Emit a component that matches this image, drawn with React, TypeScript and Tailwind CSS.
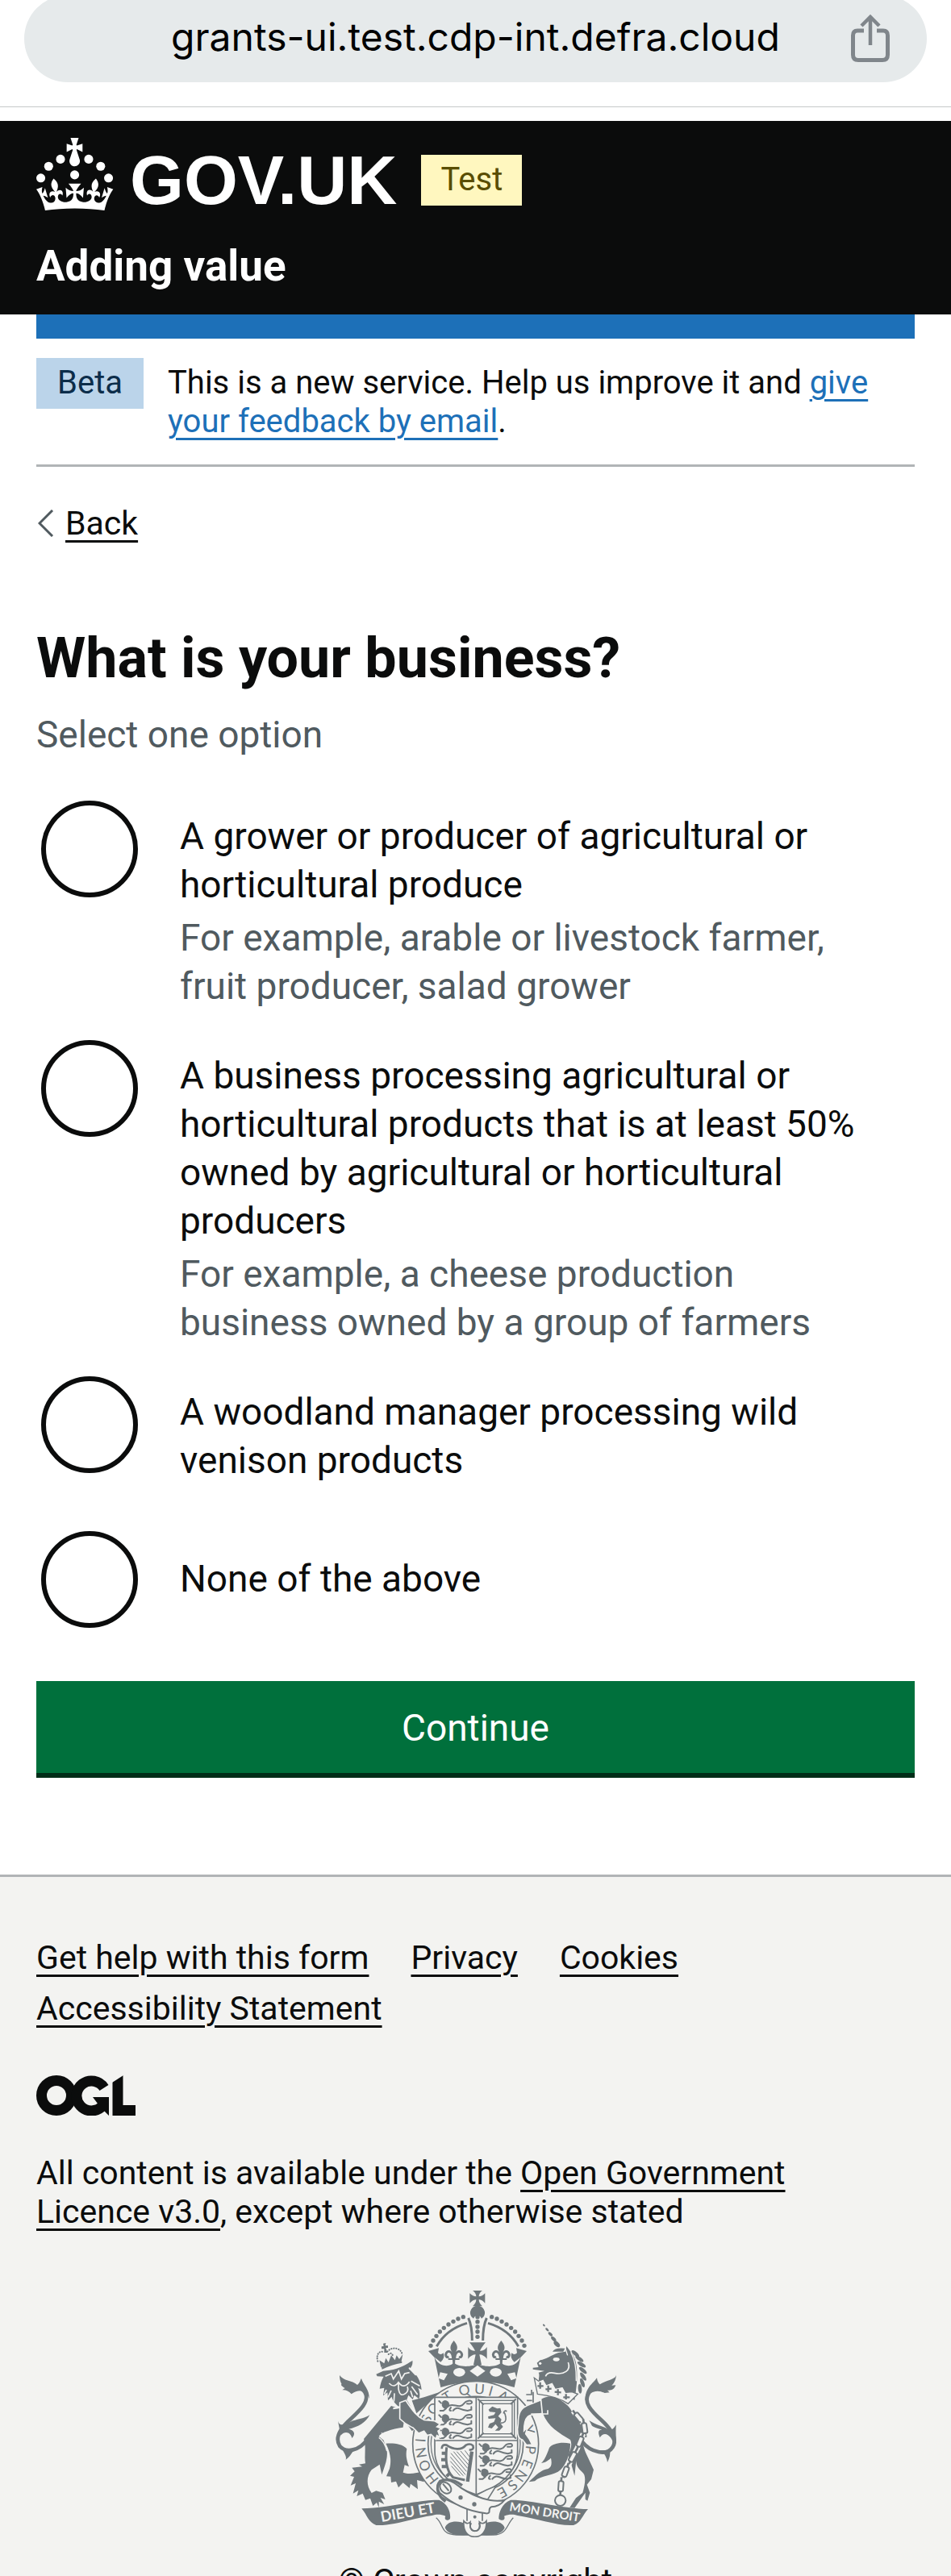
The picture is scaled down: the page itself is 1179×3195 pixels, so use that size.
import type { ReactNode } from "react";

type Option = { id: string; label: string; hint?: string };

const options: Option[] = [
  {
    id: "grower",
    label: "A grower or producer of agricultural or horticultural produce",
    hint: "For example, arable or livestock farmer, fruit producer, salad grower",
  },
  {
    id: "processor",
    label:
      "A business processing agricultural or horticultural products that is at least 50% owned by agricultural or horticultural producers",
    hint: "For example, a cheese production business owned by a group of farmers",
  },
  { id: "woodland", label: "A woodland manager processing wild venison products" },
  { id: "none", label: "None of the above" },
];

const footerLinks = ["Get help with this form", "Privacy", "Cookies", "Accessibility Statement"];

function TextLink({ children, className = "" }: { children: ReactNode; className?: string }) {
  return (
    <a href="#" className={`underline decoration-[3px] underline-offset-[7px] ${className}`}>
      {children}
    </a>
  );
}

function ShareIcon() {
  return (
    <svg viewBox="0 0 50 60" className="h-[60px] w-[50px]" fill="none" stroke="#80868b" strokeWidth="5" aria-hidden="true">
      <path d="M17 20H9Q3.500 20 3.500 26V50Q3.500 56.500 10 56.500H40Q46.500 56.500 46.500 50V26Q46.500 20 41 20H33" />
      <path d="M25 38V4M14 14L25 3L36 14" strokeWidth="4.500" />
    </svg>
  );
}

function CrownIcon() {
  return (
    <svg viewBox="0 0 64 60" className="h-[90px] w-24" fill="#fff" aria-hidden="true">
      <circle cx="20" cy="17.6" r="3.7" />
      <circle cx="10.2" cy="23.5" r="3.7" />
      <circle cx="3.7" cy="33.2" r="3.7" />
      <circle cx="31.7" cy="30.6" r="3.7" />
      <circle cx="43.3" cy="17.6" r="3.7" />
      <circle cx="53.2" cy="23.5" r="3.7" />
      <circle cx="59.7" cy="33.2" r="3.7" />
      <path d="M33.1,9.8c.2-.1.3-.3.5-.5l4.6,2.4v-6.8l-4.6,1.5c-.1-.2-.3-.3-.5-.5l1.9-5.9h-6.7l1.9,5.9c-.2.1-.3.3-.5.5l-4.6-1.5v6.8l4.6-2.4c.1.2.3.3.5.5l-2.6,8c-.9,2.8,1.2,5.7,4.1,5.7h0c3,0,5.1-2.9,4.1-5.7l-2.6-8ZM37,37.9s-3.4,3.8-4.1,6.1c2.2,0,4.2-.5,6.4-2.8l-.7,8.5c-2-2.8-4.4-4.1-5.7-3.8.1,3.1.5,6.7,5.8,7.2,3.7.3,6.7-1.5,7-3.8.4-2.6-2-4.3-3.7-1.6-1.4-4.5,2.4-6.1,4.9-3.2-1.9-4.5-1.8-7.7,2.4-10.9,3,4,2.6,7.3-1.2,11.1,2.4-1.3,6.2,0,4,4.6-1.2-2.8-3.7-2.2-4.2.2-.3,1.7.7,3.7,3,4.2,1.9.3,4.7-.9,7-5.9-1.3,0-2.4.7-3.9,1.7l2.4-8c.6,2.3,1.4,3.7,2.2,4.5.6-1.6.5-2.8,0-5.3l5,1.8c-2.6,3.6-5.2,8.7-7.3,17.5-7.4-1.1-15.7-1.7-24.5-1.7h0c-8.8,0-17.1.6-24.5,1.7-2.1-8.9-4.7-13.9-7.3-17.5l5-1.8c-.5,2.5-.6,3.7,0,5.3.8-.8,1.6-2.3,2.2-4.5l2.4,8c-1.5-1-2.6-1.7-3.9-1.7,2.3,5,5.2,6.2,7,5.9,2.3-.4,3.3-2.4,3-4.2-.5-2.4-3-3.1-4.2-.2-2.2-4.6,1.6-6,4-4.6-3.7-3.7-4.2-7.1-1.2-11.1,4.2,3.2,4.3,6.4,2.4,10.9,2.5-2.8,6.3-1.3,4.9,3.2-1.8-2.7-4.1-1-3.7,1.6.3,2.3,3.3,4.1,7,3.8,5.4-.5,5.7-4.2,5.8-7.2-1.3-.2-3.7,1-5.7,3.8l-.7-8.5c2.2,2.3,4.2,2.7,6.4,2.8-.7-2.3-4.1-6.1-4.1-6.1h10.6,0Z" />
    </svg>
  );
}

function LicenceMark() {
  return (
    <svg viewBox="0 0 123 50" className="h-[50px] w-[123px]" role="img" aria-label="Open Government Licence">
      <g fill="none" stroke="#0b0c0c" strokeWidth="13">
        <circle cx="25" cy="25" r="18.500" />
        <path d="M84 15.500A18.500 18.500 0 1 0 82 38" />
        <path d="M101 0V43.500H123" strokeLinejoin="miter" />
      </g>
      <path d="M70 27H90V50L84 44L70 46L76 35Z" fill="#0b0c0c" />
      <path d="M94 0H108L94 9Z" fill="#f3f3f1" />
    </svg>
  );
}

const INK = "#6f777b";
const GROUND = "#f3f3f1";

const mottoLetters: [string, number][] = [
  ["H", -128], ["O", -113], ["N", -99], ["I", -86], ["S", -63], ["O", -50], ["T", -31],
  ["Q", -12], ["U", 4], ["I", 16], ["A", 30], ["Y", 75], ["P", 96], ["E", 111], ["N", 125],
  ["S", 138], ["E", 151],
];

const arcBeads = [[75, 223], [84, 204], [96, 187], [109, 171], [124, 157], [141, 144], [159, 133], [177, 123], [196, 116]];
const maneLeaves = [[1003, 418, 40], [1018, 437, 35], [1026, 458, 32], [1031, 480, 40], [1032, 503, 55], [1029, 526, 70], [1020, 548, 85]];
const hornTwists = [[886, 312, 5, 3], [898, 328, 8, 4], [910, 345, 10, 5], [922, 363, 12, 6], [934, 382, 14, 8]];
const chainLinks = [[1015, 655, -40], [1037, 695, -8], [1020, 745, 22], [993, 802, 28], [966, 857, 20], [949, 911, 4]];
const passantLions = [[494, 588], [494, 640], [494, 690], [644, 748], [644, 793], [640, 842]];

function PassantLion({ x, y }: { x: number; y: number }) {
  return (
    <g transform={`translate(${x} ${y})`} stroke={INK} strokeLinecap="round" fill="none" strokeWidth="6">
      <path d="M14 8Q24 -2 36 8Q44 16 36 30L26 36Q14 32 12 22Z" fill={INK} stroke="none" />
      <path d="M34 26C50 12 66 28 82 24S94 8 108 6Q122 2 124 10T106 16" />
      <path d="M2 6L10 14M6 42H18L28 34M46 30Q36 42 46 42" />
      <path d="M54 42Q64 28 78 34T108 42L122 38V28" />
    </g>
  );
}

function Leaf({ x, y, rx, ry, turn }: { x: number; y: number; rx: number; ry: number; turn: number }) {
  return <ellipse cx={x} cy={y} rx={rx} ry={ry} transform={`rotate(${turn} ${x} ${y})`} />;
}

function CrownHalf() {
  return (
    <g>
      {arcBeads.map(([x, y]) => (
        <circle key={x} cx={x} cy={y} r="8" />
      ))}
      <path d="M97 226Q132 162 210 139M215 120Q229 150 229 204" fill="none" stroke={INK} strokeWidth="9" />
      <path d="M66 243L105 232L102 250Q112 260 122 250Q130 268 112 284L86 264Z" />
      <path d="M161 204C148 220 144 232 154 246L157 292H165L168 246C178 232 174 220 161 204Z" />
      <path d="M158 270C156 240 134 238 131 256Q132 270 142 264M164 270C166 240 188 238 191 256Q190 270 180 264" fill="none" stroke={INK} strokeWidth="9" />
      <path d="M140 270H182V276H140Z" />
    </g>
  );
}

function RoyalArms() {
  return (
    <svg viewBox="111 183 1044 918" className="h-[306px] w-[348px]" fill={INK} role="img" aria-label="Royal coat of arms">
      {/* Lion tail, hind legs and body */}
      <path d="M230 735C200 780 150 788 127 762C106 730 132 692 168 660C206 625 232 598 224 570C214 540 186 542 168 560" fill="none" stroke={INK} strokeWidth="14" />
      <path d="M126 498C140 520 172 516 192 534C204 524 202 516 207 510C214 535 238 550 236 585C225 552 198 548 170 568C160 556 148 552 136 553L146 546C134 540 128 532 134 532C128 520 126 510 126 498Z" />
      <path d="M120 668C126 690 148 682 165 672C190 660 214 662 238 646C225 674 192 692 160 698C182 702 186 718 172 732C168 712 148 702 130 722Z" />
      <path d="M138 778C148 795 152 802 149 812C168 800 168 785 188 770Z" />
      <path d="M298 752C325 750 360 752 376 772C370 800 378 820 384 838L368 832L362 860C385 868 410 862 440 856V895L414 888L417 922L390 902L386 918L362 898L345 916L336 893L318 897L316 875L300 874L312 845C318 820 318 790 298 752Z" />
      <path d="M318 612L216 735C226 760 217 800 222 826L198 830L210 838L172 842L182 856L165 872L180 876L167 908L186 900L176 938L196 926L190 948L212 938L222 962L240 956L250 984L264 972L272 990V968L292 978L278 954L296 960L286 935L262 928L245 936C225 910 225 875 245 850L275 830L283 868C292 840 306 810 302 780L290 740L272 725C280 710 320 698 362 692L366 665L395 705L420 690C400 630 385 600 375 590L346 622Z" />
      <path d="M272 730Q292 742 302 780M282 712L300 735" fill="none" stroke={GROUND} strokeWidth="4" />
      <path d="M395 592L440 580L500 560L412 640Z" />

      {/* Lion head */}
      <path d="M262 494L288 482C320 482 360 470 397 443C399 458 394 468 384 476C410 488 428 515 431 552L418 545C426 562 425 578 421 586L404 572L398 588L382 572L372 600L346 614C332 604 322 590 320 578L306 592L304 562L288 574L292 545L275 548C278 530 282 515 290 503L266 502Z" />
      <g fill="none" stroke={GROUND} strokeWidth="5">
        <path d="M296 502L318 492L326 512L346 482L356 512L368 492L386 488" />
        <path d="M310 528Q330 548 345 524Q365 552 386 522M345 524V548Q350 582 372 565Q384 556 378 540" />
        <path d="M300 552L292 568M318 555L306 580M330 565L328 596M392 520L424 538M394 540L416 570M390 556L398 580M384 470L410 498" />
        <path d="M325 622Q360 620 372 596" strokeWidth="6" />
      </g>
      <path d="M282 468Q320 448 358 446V452Q320 458 284 476Z" />
      <path d="M274 442L280 468L356 446L361 420L348 438L338 424L332 442L318 424L308 450L298 434L292 454Z" />
      <path d="M288 380L298 378L296 388L306 388V396L298 396L304 414H292L292 400L282 400V391L290 390Z" />
      <path d="M268 446C260 418 276 406 290 412M304 410C320 390 354 396 358 418M308 420Q318 410 326 428" fill="none" stroke={INK} strokeWidth="6" strokeLinecap="round" strokeDasharray="1 8" />

      {/* Unicorn tail, legs and body */}
      <path d="M1028 745C1060 785 1120 800 1142 765C1160 735 1138 700 1100 665C1060 630 1035 600 1050 570C1060 545 1085 540 1110 556" fill="none" stroke={INK} strokeWidth="14" />
      <path d="M1155 498C1150 515 1120 515 1094 532C1084 522 1084 512 1083 508C1068 530 1038 545 1040 592C1055 556 1085 550 1112 564L1130 562L1122 554C1138 556 1148 550 1153 535L1138 536C1150 525 1154 510 1155 498Z" />
      <path d="M1054 666C1080 685 1110 686 1132 704C1142 700 1150 690 1155 682C1150 715 1160 745 1148 765C1142 725 1112 700 1094 730C1085 705 1090 702 1102 700C1080 694 1064 690 1062 680Z" />
      <path d="M1092 778Q1118 790 1122 822Q1134 800 1132 778Z" />
      <path d="M984 752C950 745 918 752 906 768C898 790 890 812 876 825C895 822 905 812 912 806C916 825 915 840 902 846C875 850 858 868 830 895L852 892C875 870 925 872 948 850C968 830 985 790 984 752Z" />
      <path d="M862 600C885 575 915 572 938 586C965 600 988 618 994 645C1022 670 1036 700 1028 730C1030 760 1040 785 1048 800L1071 850L1062 885L1046 905L1057 935L1048 965L1040 960V935L1000 992L982 990L1005 955L1030 935C1040 900 1044 870 1028 858C1012 845 1005 830 1006 815L1000 872L988 830L976 795C986 775 992 755 984 738C945 715 900 690 882 640H835V605Z" />

      {/* Garter */}
      <circle cx="632" cy="754" r="234" fill={GROUND} stroke={INK} strokeWidth="5" />
      <circle cx="632" cy="754" r="177" fill="none" stroke={INK} strokeWidth="5" />
      <circle cx="632" cy="754" r="166" fill="none" stroke={INK} strokeWidth="4" />
      <g fontFamily="Lato, sans-serif" fontSize="52" fontWeight="400" textAnchor="middle">
        {mottoLetters.map(([letter, angle], i) => (
          <text key={i} x="632" y="567" transform={`rotate(${angle} 632 754)`}>
            {letter}
          </text>
        ))}
      </g>

      {/* Quartered shield */}
      <path d="M480 580H788V780C788 860 720 915 634 942C548 915 480 860 480 780Z" fill={GROUND} stroke={INK} strokeWidth="5" />
      <path d="M634 580V942M480 741H788" stroke={INK} strokeWidth="5" />
      {passantLions.map(([x, y]) => (
        <PassantLion key={`${x}-${y}`} x={x} y={y} />
      ))}
      <g fill="none" stroke={INK} strokeWidth="4">
        <rect x="646" y="592" width="130" height="136" />
        <rect x="658" y="604" width="110" height="112" />
        <path d="M640 586L662 608M782 586L762 606M640 734L662 712M782 734L762 712" strokeWidth="6" />
      </g>
      <path d="M694 614L712 622L724 620L728 636L716 650L728 662L724 676L734 690L720 704H704L716 692L706 680L692 696L678 692L684 678L700 672L706 658L680 660L678 652L700 646L706 636L684 634L680 626Z" />
      <path d="M724 676Q748 676 744 654T736 640Q738 626 748 632" fill="none" stroke={INK} strokeWidth="5" />
      <g fill="none" stroke={INK}>
        <path d="M506 772Q506 754 524 758C550 776 580 778 596 758Q612 750 622 760Q628 776 608 776" strokeWidth="8" />
        <path d="M524 766C520 810 520 850 548 878L592 888" strokeWidth="9" />
        <path d="M618 782L602 894" strokeWidth="13" />
        <path d="M524 788H506M522 812H504M524 838H506M536 862L524 874" strokeWidth="12" />
        <path d="M540 788L598 856M550 782L602 844M562 782L606 832M576 780L608 818M538 802L594 868M538 818L586 872M542 836L574 872M592 778L610 802" strokeWidth="3" />
      </g>

      {/* Supporters' forelegs over the shield */}
      <path d="M350 600L372 592C395 625 410 650 440 664L480 668L500 680L488 690L504 696L492 706L500 728L488 722L484 736L466 718L452 722L440 706L420 714L400 694Q370 680 350 660Z" stroke={GROUND} strokeWidth="5" />
      <path d="M880 640C865 645 840 640 826 652C812 665 812 690 812 705L826 690L818 716L832 736L842 756L822 758L806 738C785 735 786 700 790 680C790 640 796 620 835 606L875 590Z" stroke={GROUND} strokeWidth="5" />
      <path d="M838 642H900V628" fill="none" stroke={GROUND} strokeWidth="5" />

      {/* Unicorn head, mane and coronet collar */}
      <path d="M860 452L872 442C895 438 912 424 940 414L966 410L970 390L986 412C1012 440 1016 500 1000 590L950 570L868 522C864 510 872 500 866 488L888 482L845 476V470L866 468Z" />
      {maneLeaves.map(([x, y, turn]) => (
        <Leaf key={y} x={x} y={y} rx={18} ry={7} turn={turn} />
      ))}
      {hornTwists.map(([x, y, rx, ry]) => (
        <Leaf key={y} x={x} y={y} rx={rx} ry={ry} turn={45} />
      ))}
      <path d="M918 410Q926 394 964 398L958 410Z" />
      <g fill="none" stroke={GROUND} strokeWidth="5">
        <path d="M976 450C988 480 960 498 925 490C905 486 896 492 892 502" />
        <path d="M966 398L974 424M986 412Q1008 450 1006 520" strokeWidth="4" />
      </g>
      <ellipse cx="932" cy="439" rx="12" ry="7" fill={GROUND} />
      <circle cx="872" cy="454" r="5" fill={GROUND} />
      <path d="M850 508L866 520L884 512L896 532L918 524L930 546L956 540L968 562L990 560L1012 568L976 604C940 580 900 572 862 568Z" fill={GROUND} stroke={INK} strokeWidth="4" />
      <path d="M872 524V548M862 538H884M902 536V560M892 550L914 548M938 550V572M926 560L950 562M968 568V588M958 580L982 580" stroke={INK} strokeWidth="7" />
      <path d="M820 570H840V552M822 592H842M846 560V600" fill="none" stroke={INK} strokeWidth="5" />

      {/* Chain */}
      {chainLinks.map(([x, y, turn]) => (
        <g key={y} transform={`rotate(${turn} ${x} ${y})`}>
          <path d={`M${x} ${y - 32}V${y + 32}`} stroke={GROUND} strokeWidth="20" />
          <path d={`M${x} ${y - 34}V${y - 18}M${x} ${y + 18}V${y + 34}`} stroke={INK} strokeWidth="8" />
          <rect x={x - 9} y={y - 19} width="18" height="38" rx="6" fill={GROUND} stroke={INK} strokeWidth="6" />
        </g>
      ))}
      <circle cx="947" cy="964" r="20" fill={GROUND} stroke={INK} strokeWidth="6" />

      {/* Imperial crown */}
      <g transform="translate(390 165)">
        <path d="M84 256L108 382Q249 312 390 382L414 256Z" fill={GROUND} />
        <CrownHalf />
        <g transform="matrix(-1 0 0 1 498 0)">
          <CrownHalf />
        </g>
        <path d="M231 18H267C258 24 254 32 254 40C262 40 270 36 277 28V65C270 56 262 52 254 51C254 60 258 68 267 76H231C240 68 244 60 244 51C236 52 228 56 220 65V28C228 36 236 40 244 40C244 32 240 24 231 18Z" />
        <path d="M249 74A27 27 0 0 1 272 115L264 122A16 16 0 0 0 234 122L226 115A27 27 0 0 1 249 74Z" />
        {[116, 134, 153, 171, 190].map((y) => (
          <circle key={y} cx="249" cy={y} r="8" />
        ))}
        <path d="M219 211H279C270 222 262 234 258 242C268 242 276 240 284 228V272C276 262 266 256 256 256L264 294H234L242 256C232 256 222 262 214 272V228C222 240 230 242 240 242C236 234 228 222 219 211Z" />
        <path d="M86 254C96 306 150 304 161 286C175 304 232 304 249 288C266 304 323 304 337 286C348 304 402 306 412 254L386 378Q249 336 112 378Z" />
        <g fill={GROUND}>
          <ellipse cx="181" cy="322" rx="22" ry="16" />
          <ellipse cx="317" cy="322" rx="22" ry="16" />
          <path d="M249 296L278 317L249 338L220 317Z" />
          <path d="M110 322L138 328L124 352L104 344ZM388 322L360 328L374 352L394 344Z" />
        </g>
      </g>

      {/* Belt and pendant */}
      <path d="M634 944L672 925L708 910L672 968Z" fill={GROUND} stroke={INK} strokeWidth="5" />
      <path d="M600 985V1040M657 1000V1040" stroke={INK} strokeWidth="5" />
      <path d="M500 892C535 878 560 905 582 920C625 948 690 975 740 962C722 985 706 988 690 988C674 994 694 1014 670 1012C615 1005 555 985 498 935C486 918 488 902 500 892Z" fill={GROUND} stroke={INK} strokeWidth="6" />
      <path d="M520 968C490 945 482 915 500 892Q540 876 582 908" fill="none" stroke={INK} strokeWidth="10" />
      <ellipse cx="520" cy="917" rx="18" ry="24" transform="rotate(-45 520 917)" fill="none" stroke={INK} strokeWidth="6" />
      <path d="M510 902L532 928" stroke={INK} strokeWidth="6" />
      <circle cx="576" cy="953" r="8" />
      <circle cx="627" cy="978" r="8" />
      <circle cx="629" cy="1025" r="6" />

      {/* Motto ribbon */}
      <path d="M485 1028C514 1050 500 1092 560 1092H698C750 1092 748 1050 772 1028" fill="none" stroke={INK} strokeWidth="4" />
      <path d="M518 1066C526 1038 572 1038 594 1052Q594 1080 606 1093C560 1095 530 1092 518 1066ZM740 1066C732 1038 686 1038 664 1052Q664 1080 652 1093C698 1095 728 1092 740 1066Z" />
      <path d="M588 1040Q600 1056 612 1044Q608 1078 629 1078T646 1044Q660 1056 672 1040C674 1080 654 1099 629 1099S584 1080 588 1040Z" fill={GROUND} stroke={INK} strokeWidth="5" />
      <path d="M616 1048A18 18 0 1 0 644 1048" fill="none" stroke={INK} strokeWidth="6" />
      <path d="M208 994C300 992 430 960 496 962C530 976 540 1010 537 1032C530 1042 512 1038 520 1022C500 1014 484 1016 470 1020C400 1030 320 1060 262 1056C232 1045 230 1020 208 994Z" />
      <path d="M1050 996C958 994 828 960 762 962C728 976 718 1010 718 1032C726 1042 746 1038 738 1022C758 1014 774 1016 788 1020C858 1030 938 1060 996 1056C1026 1045 1028 1020 1050 996Z" />
      <g fill={GROUND} fontFamily="Lato, sans-serif" fontWeight="700">
        <text x="282" y="1044" fontSize="54" transform="rotate(-10 282 1044)">DIEU ET</text>
        <text x="756" y="1002" fontSize="45" transform="rotate(9 756 1002)">MON DROIT</text>
      </g>
    </svg>
  );
}

export default function App() {
  return (
    <div className="flex h-screen flex-col overflow-hidden bg-white font-[Roboto,sans-serif] text-[#0b0c0c]">
      <div className="shrink-0 border-b border-[#c6c9c9] px-[30px] pb-[30px]">
        <div className="relative -mt-[6px] flex h-[108px] items-center justify-center rounded-full bg-[#e6eaeb] px-24">
          <span className="pb-1 font-[Inter,sans-serif] text-[48px] leading-[60px] text-black">grants-ui.test.cdp-int.defra.cloud</span>
          <button type="button" aria-label="Share" className="absolute right-[45px]">
            <ShareIcon />
          </button>
        </div>
      </div>

      <header className="mt-[17px] shrink-0 bg-[#0b0c0c] px-[45px] pt-[21px] pb-[30px] text-white">
        <div className="flex h-[90px] items-end">
          <a href="#" className="flex items-end gap-5">
            <CrownIcon />
            <span className="font-['Liberation_Sans',sans-serif] text-[86px] leading-[76px] font-bold">GOV.UK</span>
          </a>
          <strong className="mb-[6px] ml-[30px] bg-[#fff7bf] px-6 pt-[7px] pb-2 text-[40px] leading-[48px] font-normal text-[#594d00]">
            Test
          </strong>
        </div>
        <a href="#" className="mt-[39px] block text-[53px] leading-[60px] font-bold">
          Adding value
        </a>
      </header>

      <div className="px-[45px]">
        <div className="h-[30px] bg-[#1d70b8]" />
        <div className="flex items-start gap-[30px] border-b-[3px] border-[#b1b4b6] pt-6 pb-[29px] text-[40px] leading-[48px]">
          <strong className="bg-[#bbd4ea] px-[26px] pt-[7px] pb-2 font-normal text-[#0c2d4a]">Beta</strong>
          <p className="pt-[7px]">
            This is a new service. Help us improve it and{" "}
            <TextLink className="text-[#1d70b8]">give your feedback by email</TextLink>.
          </p>
        </div>

        <nav className="flex items-center gap-[14px] pt-[46px] text-[41px] leading-[48px]">
          <svg viewBox="0 0 20 34" className="ml-[2px] h-[34px] w-5" fill="none" stroke="#505a5f" strokeWidth="3" aria-hidden="true">
            <path d="M18 1L2 17L18 33" />
          </svg>
          <TextLink>Back</TextLink>
        </nav>

        <form onSubmit={(e) => e.preventDefault()}>
          <fieldset aria-describedby="business-hint">
            <legend className="pt-[106px]">
              <h1 className="text-[70px] leading-[75px] font-bold">What is your business?</h1>
            </legend>
            <p id="business-hint" className="mt-[27px] text-[46px] leading-[60px] text-[#505a5f]">
              Select one option
            </p>
            <div className="mt-[46px] flex flex-col gap-[30px]">
              {options.map((option) => (
                <div key={option.id} className="flex min-h-[132px] items-start gap-[52px] pr-[45px] pl-[6px]">
                  <input
                    type="radio"
                    id={option.id}
                    name="business"
                    value={option.id}
                    aria-describedby={option.hint ? `${option.id}-hint` : undefined}
                    className="mt-[6px] size-[120px] shrink-0 appearance-none rounded-full border-[6px] border-[#0b0c0c] checked:bg-[#0b0c0c]"
                  />
                  <div
                    className={`flex min-h-[132px] flex-1 flex-col justify-center gap-[6px] pt-5 text-[46px] leading-[60px] ${option.hint ? "pb-px" : "pb-[22px]"}`}
                  >
                    <label htmlFor={option.id}>{option.label}</label>
                    {option.hint && (
                      <p id={`${option.id}-hint`} className="text-[#505a5f]">
                        {option.hint}
                      </p>
                    )}
                  </div>
                </div>
              ))}
            </div>
          </fieldset>
          <button
            type="submit"
            className="mt-[60px] w-full border-b-[6px] border-[#002d18] bg-[#00703c] pt-7 pb-[26px] text-[46px] leading-[60px] text-white"
          >
            Continue
          </button>
        </form>
      </div>

      <footer className="mt-[120px] grow border-t-[3px] border-[#b1b4b6] bg-[#f3f3f1] px-[45px] pt-[76px] text-[41px] leading-[48px]">
        <ul className="flex flex-wrap gap-x-[52px] gap-y-[15px]">
          {footerLinks.map((link) => (
            <li key={link}>
              <TextLink>{link}</TextLink>
            </li>
          ))}
        </ul>
        <div className="mt-[59px]">
          <LicenceMark />
        </div>
        <p className="mt-[47px] pr-[60px]">
          All content is available under the <TextLink>Open Government Licence v3.0</TextLink>, except where otherwise stated
        </p>
        <div className="mt-[74px] flex flex-col items-center gap-[30px]">
          <RoyalArms />
          <a href="#">© Crown copyright</a>
        </div>
      </footer>
    </div>
  );
}
